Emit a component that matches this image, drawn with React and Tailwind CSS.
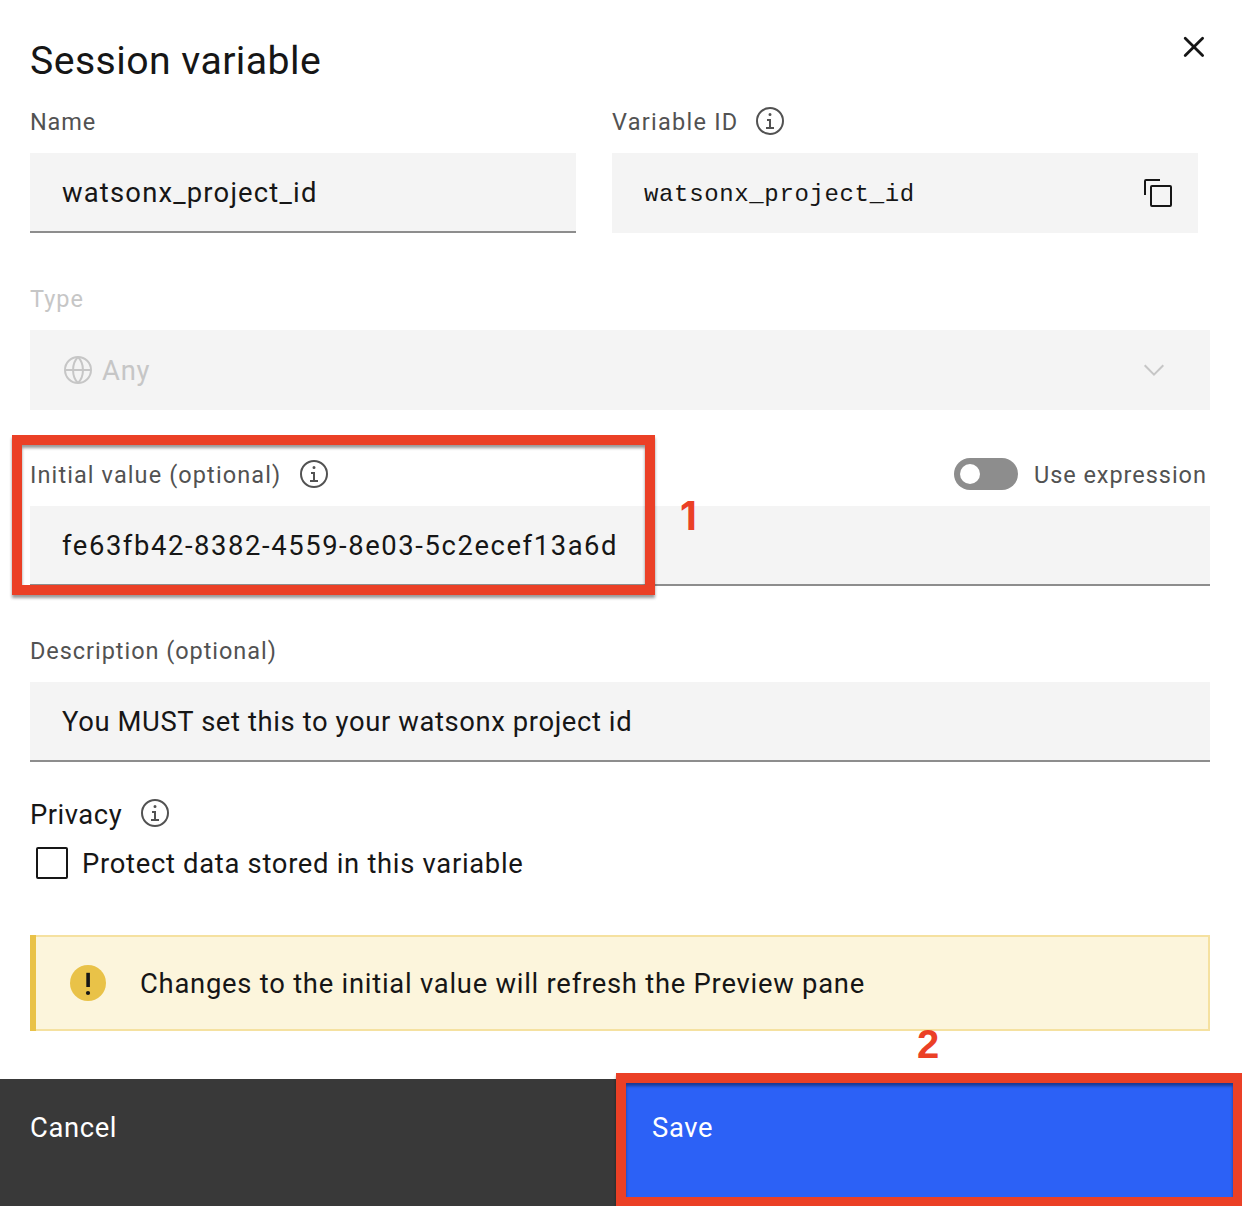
function InfoIcon({ className = "" }) {
  return (
    <svg viewBox="0 0 32 32" className={`size-8 shrink-0 fill-[#525252] ${className}`}>
      <path d="M17 22V14H13v2h2v6H12v2h8V22ZM16 8a1.5 1.5 0 1 0 1.5 1.5A1.5 1.5 0 0 0 16 8Z" />
      <path d="M16 30A14 14 0 1 1 30 16 14 14 0 0 1 16 30ZM16 4A12 12 0 1 0 28 16 12 12 0 0 0 16 4Z" />
    </svg>
  );
}

function Label({ children, className = "" }) {
  return <span className={`text-[23.5px] leading-8 whitespace-nowrap ${className}`}>{children}</span>;
}

function Field({ children }) {
  return (
    <div className="flex h-20 items-center border-b-2 border-[#8d8d8d] bg-[#f4f4f4] pt-1 pl-8 text-[27.4px] whitespace-nowrap">
      {children}
    </div>
  );
}

export default function App() {
  return (
    <div className="relative flex h-[1206px] w-[1242px] flex-col overflow-hidden bg-white font-['Roboto',sans-serif] text-[#161616]">
      <main className="flex grow flex-col pr-8 pl-[30px]">
        <header className="flex h-[106px] justify-between">
          <h1 className="pt-[37px] text-[39.2px] leading-[48px] tracking-[0.44px]">Session variable</h1>
          <svg viewBox="0 0 40 40" className="mt-[27px] mr-[-4px] size-10 fill-none stroke-[#161616] stroke-[2.8]">
            <path d="M11.2 11.2 28.6 28.6M28.6 11.2 11.2 28.6" strokeLinecap="round" />
          </svg>
        </header>

        <section className="flex gap-9">
          <div className="w-[546px]">
            <div className="flex h-[47px] text-[#525252]">
              <Label className="tracking-[0.83px]">Name</Label>
            </div>
            <Field><span className="tracking-[1.19px]">watsonx_project_id</span></Field>
          </div>
          <div className="w-[586px]">
            <div className="flex h-[47px] text-[#525252]">
              <Label className="w-[142px] tracking-[1.26px]">Variable ID</Label>
              <InfoIcon className="-mt-px" />
            </div>
            <div className="flex h-20 items-center justify-between bg-[#f4f4f4] pr-6 pl-8">
              <span className="pt-1 font-['Liberation_Mono',monospace] text-[24px] tracking-[0.64px]">watsonx_project_id</span>
              <svg viewBox="0 0 32 32" className="size-8 fill-[#161616]">
                <path d="M28 10V28H10V10H28m0-2H10a2 2 0 0 0-2 2V28a2 2 0 0 0 2 2H28a2 2 0 0 0 2-2V10a2 2 0 0 0-2-2Z" />
                <path d="M4 18H2V4A2 2 0 0 1 4 2H18V4H4Z" />
              </svg>
            </div>
          </div>
        </section>

        <section className="mt-[50px] text-[#c6c6c6]">
          <div className="flex h-[47px]"><Label className="tracking-[1px]">Type</Label></div>
          <div className="flex h-20 items-center bg-[#f4f4f4] pr-10 pl-8 text-[27.4px]">
            <svg viewBox="0 0 32 32" className="size-8 fill-none stroke-[#c6c6c6] stroke-2">
              <circle cx="16" cy="16" r="13" />
              <path d="M3 16H29M16 3C9.4 9.5 9.4 22.5 16 29M16 3C22.6 9.5 22.6 22.5 16 29" />
            </svg>
            <span className="grow pt-[3px] pl-2 tracking-[0.8px]">Any</span>
            <svg viewBox="0 0 32 32" className="size-8 fill-none stroke-[#c6c6c6] stroke-2">
              <path d="M6.7 11.2 16 20.6 25.3 11.2" />
            </svg>
          </div>
        </section>

        <section className="mt-[49px]">
          <div className="flex h-[47px] text-[#525252]">
            <Label className="w-[268px] tracking-[1.1px]">Initial value (optional)</Label>
            <InfoIcon className="-mt-px" />
            <div className="ml-auto flex h-8 items-start">
              <span className="-mt-px flex h-8 w-16 items-center rounded-full bg-[#8d8d8d] pl-1.5">
                <span className="size-5 rounded-full bg-white" />
              </span>
              <Label className="ml-4 w-[176px] tracking-[0.95px]">Use expression</Label>
            </div>
          </div>
          <Field><span className="tracking-[1.59px]">fe63fb42-8382-4559-8e03-5c2ecef13a6d</span></Field>
        </section>

        <section className="mt-[49px]">
          <div className="flex h-[47px] text-[#525252]">
            <Label className="tracking-[0.95px]">Description (optional)</Label>
          </div>
          <Field><span className="tracking-[0.61px]">You MUST set this to your watsonx project id</span></Field>
        </section>

        <section className="mt-[35px]">
          <div className="flex h-[50px]">
            <span className="w-[109px] text-[27.4px] leading-9 tracking-[0.52px]">Privacy</span>
            <InfoIcon />
          </div>
          <div className="flex h-8 items-center pl-1.5">
            <span className="size-8 rounded-xs border-2 border-[#161616]" />
            <span className="pt-0.5 pl-3.5 text-[27.4px] leading-8 tracking-[0.7px]">Protect data stored in this variable</span>
          </div>
        </section>

        <section className="mt-14 flex h-24 items-center border-2 border-l-0 border-[#f5e1a0] bg-[#fcf5dc]">
          <span className="-my-0.5 h-24 w-1.5 bg-[#e9c248]" />
          <svg viewBox="0 0 36 36" className="ml-[34px] size-9 fill-[#161616]">
            <circle cx="18" cy="18" r="18" className="fill-[#e9c248]" />
            <rect x="16.3" y="7.8" width="3.6" height="14.2" />
            <circle cx="18" cy="28" r="2.1" />
          </svg>
          <span className="pt-1 pl-[34px] text-[27.4px] tracking-[0.75px]">Changes to the initial value will refresh the Preview pane</span>
        </section>
      </main>

      <footer className="flex h-[127px] shrink-0 text-[27.4px] leading-8 text-white">
        <button className="flex w-[621px] bg-[#393939] pt-[33px] pl-[30px] tracking-[0.62px]">Cancel</button>
        <button className="flex w-[621px] bg-[#2c61f6] pt-[33px] pl-[31px] tracking-[0.62px]">Save</button>
      </footer>

      {/* Step annotations laid over the dialog */}
      <div className="absolute top-[435px] left-3 h-40 w-[643px] border-10 border-[#eb4026] drop-shadow-[0_3px_1.5px_rgba(0,0,0,0.4)]" />
      <div className="absolute top-[1073px] left-[616px] h-[134px] w-[627px] border-10 border-[#eb4026] drop-shadow-[0_3px_1.5px_rgba(0,0,0,0.4)]" />
      <span className="absolute top-[494px] left-[680px] font-['Inter',sans-serif] text-[39px] leading-[44px] font-bold text-[#eb4026]">1</span>
      <span className="absolute top-[1022px] left-[917px] font-['Liberation_Sans',sans-serif] text-[40px] leading-[44px] font-bold text-[#eb4026]">2</span>
    </div>
  );
}
